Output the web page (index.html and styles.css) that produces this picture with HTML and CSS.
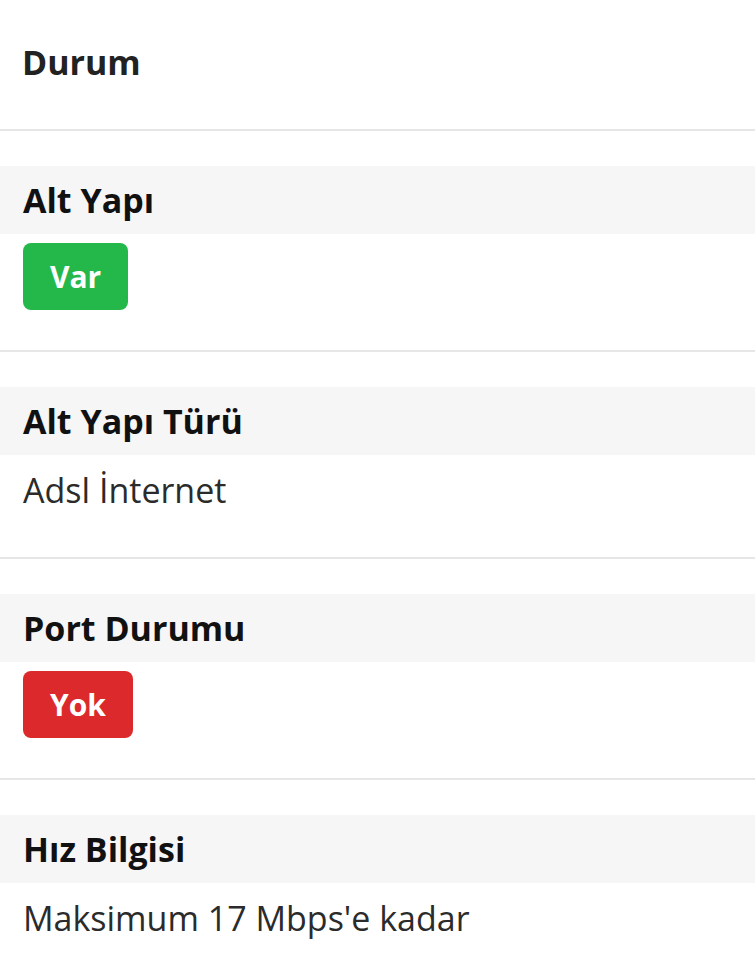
FILE: index.html
```html
<!DOCTYPE html>
<html lang="tr">
<head>
<meta charset="UTF-8">
<meta name="viewport" content="width=device-width, initial-scale=1.0">
<title>Altyapı Sorgulama Sonucu</title>
<link rel="stylesheet" href="styles.css">
</head>
<body>

<header class="status-header">
    <h1>Durum</h1>
</header>

<main class="result-list">
    <section class="result-item">
        <h2 class="result-title">Alt Yapı</h2>
        <div class="result-body">
            <span class="badge badge-yes">Var</span>
        </div>
    </section>

    <section class="result-item">
        <h2 class="result-title">Alt Yapı Türü</h2>
        <div class="result-body">
            <p>Adsl İnternet</p>
        </div>
    </section>

    <section class="result-item">
        <h2 class="result-title">Port Durumu</h2>
        <div class="result-body">
            <span class="badge badge-no">Yok</span>
        </div>
    </section>

    <section class="result-item">
        <h2 class="result-title">Hız Bilgisi</h2>
        <div class="result-body">
            <p>Maksimum 17 Mbps'e kadar</p>
        </div>
    </section>
</main>

</body>
</html>
```

FILE: styles.css
```css
/* 全体 */
body {
    font-family: "Open Sans", "Noto Sans", Arial, sans-serif;
    font-size: 34px;
    line-height: 1.5;
    background-color: #fff;
    color: #2b2b2b;
    margin: 0;
}

/* 見出し */
.status-header {
    padding: 37px 22px 41px;
}
.status-header h1 {
    margin: 0;
    font-size: 34px;
    font-weight: 700;
    color: #222;
}

/* 各項目 */
.result-item {
    border-top: 2px solid #e6e6e6;
    padding-top: 35px;
}

.result-title {
    margin: 0;
    padding: 0 23px;
    height: 68px;
    line-height: 68px;
    font-size: 34px;
    font-weight: 700;
    color: #111;
    background-color: #f6f6f6;
}

.result-body {
    padding: 9px 23px 40px;
}
.result-body p {
    margin: 0;
    line-height: 53px;
}

/* ラベル */
.badge {
    display: inline-block;
    vertical-align: top;
    height: 67px;
    line-height: 67px;
    padding: 0 27px;
    border-radius: 8px;
    color: #fff;
    font-size: 30px;
    font-weight: 700;
}
.badge-yes {
    background-color: #24b84b;
}
.badge-no {
    background-color: #dc292b;
}
```
